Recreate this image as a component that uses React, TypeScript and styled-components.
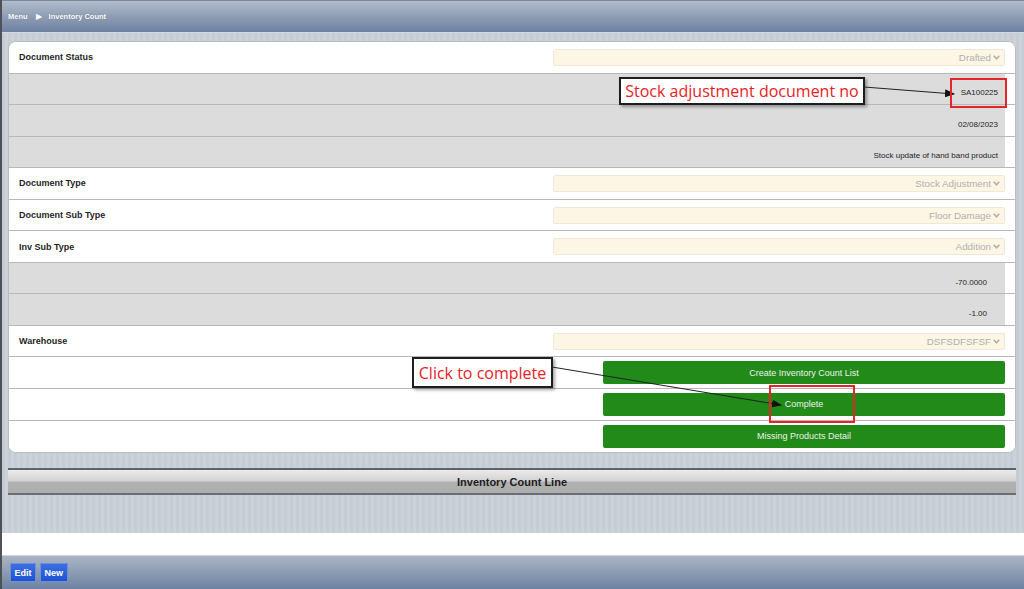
import React from 'react';
import styled, { createGlobalStyle } from 'styled-components';

const GlobalStyle = createGlobalStyle`
  html, body {
    margin: 0;
    padding: 0;
    background: #ffffff;
  }
  body {
    font-family: "Liberation Sans", Arial, sans-serif;
  }
`;

type FieldRow =
  | { kind: 'select'; label: string; value: string }
  | { kind: 'value'; value: string; inset?: boolean }
  | { kind: 'button'; text: string };

const rows: FieldRow[] = [
  { kind: 'select', label: 'Document Status', value: 'Drafted' },
  { kind: 'value', value: 'SA100225' },
  { kind: 'value', value: '02/08/2023' },
  { kind: 'value', value: 'Stock update of hand band product' },
  { kind: 'select', label: 'Document Type', value: 'Stock Adjustment' },
  { kind: 'select', label: 'Document Sub Type', value: 'Floor Damage' },
  { kind: 'select', label: 'Inv Sub Type', value: 'Addition' },
  { kind: 'value', value: '-70.0000', inset: true },
  { kind: 'value', value: '-1.00', inset: true },
  { kind: 'select', label: 'Warehouse', value: 'DSFSDFSFSF' },
  { kind: 'button', text: 'Create Inventory Count List' },
  { kind: 'button', text: 'Complete' },
  { kind: 'button', text: 'Missing Products Detail' },
];

const Chevron = () => (
  <svg width="7" height="5" viewBox="0 0 7 5">
    <path d="M0.7 0.8 L3.5 3.8 L6.3 0.8" fill="none" stroke="#b0b0b0" strokeWidth="1.6" />
  </svg>
);

const App: React.FC = () => {
  return (
    <Page>
      <GlobalStyle />
      <Header>
        <Crumb>Menu</Crumb>
        <CrumbArrow>▶</CrumbArrow>
        <Crumb>Inventory Count</Crumb>
      </Header>

      <Content>
        <Card>
          {rows.map((row, i) => {
            if (row.kind === 'select') {
              return (
                <Row key={i}>
                  <Label>{row.label}</Label>
                  <SelectBox>
                    <span>{row.value}</span>
                    <Chevron />
                  </SelectBox>
                </Row>
              );
            }
            if (row.kind === 'value') {
              return (
                <Row key={i} shaded>
                  <Value inset={row.inset}>{row.value}</Value>
                </Row>
              );
            }
            return (
              <Row key={i}>
                <ActionButton>{row.text}</ActionButton>
              </Row>
            );
          })}
        </Card>

        <SectionBar>Inventory Count Line</SectionBar>
      </Content>

      <Blank />

      <Footer>
        <FooterButton>Edit</FooterButton>
        <FooterButton>New</FooterButton>
      </Footer>

      <Callout style={{ left: 617, top: 77, width: 246, height: 28 }}>
        Stock adjustment document no
      </Callout>
      <Callout style={{ left: 410, top: 357, width: 141, height: 31 }}>
        Click to complete
      </Callout>

      <Overlay width="1024" height="589" viewBox="0 0 1024 589">
        <defs>
          <marker id="head" markerWidth="10" markerHeight="8" refX="9" refY="4" orient="auto" markerUnits="userSpaceOnUse">
            <path d="M0 0 L10 4 L0 8 Z" fill="#111" />
          </marker>
        </defs>
        <line x1="864" y1="87" x2="954" y2="94" stroke="#222" strokeWidth="1" markerEnd="url(#head)" />
        <line x1="552" y1="367" x2="781" y2="405" stroke="#222" strokeWidth="1" markerEnd="url(#head)" />
        <rect x="951" y="79" width="55" height="28" fill="none" stroke="#e4262a" strokeWidth="2" />
        <rect x="770" y="386" width="84" height="36" fill="none" stroke="#e4262a" strokeWidth="2" />
      </Overlay>
    </Page>
  );
};

const Page = styled.div`
  position: relative;
  display: flex;
  flex-direction: column;
  width: 1024px;
  height: 589px;
  box-sizing: border-box;
  border-left: 2px solid #4e5258;
  overflow: hidden;
`;

const Header = styled.div`
  display: flex;
  align-items: center;
  gap: 6px;
  height: 33px;
  flex-shrink: 0;
  padding-left: 6px;
  box-sizing: border-box;
  border-top: 1px solid #7d899b;
  border-bottom: 1px solid #d3d9e1;
  background: linear-gradient(#b2bdcc 0%, #8e9db4 50%, #6d81a1 100%);
`;

const Crumb = styled.span`
  font-size: 7.5px;
  font-weight: bold;
  color: #ffffff;
  text-shadow: 0 0 1px rgba(40, 50, 70, 0.4);
`;

const CrumbArrow = styled.span`
  font-size: 8px;
  color: #ffffff;
  margin: 0 1px 0 2px;
`;

const Content = styled.div`
  display: flex;
  flex-direction: column;
  flex-shrink: 0;
  padding: 8px 8px 38px 6px;
  background: repeating-linear-gradient(90deg, #c5ccd4 0 3px, #ccd2d9 3px 6px);
`;

const Card = styled.div`
  display: flex;
  flex-direction: column;
  background: #ffffff;
  border: 1px solid #b9bcc0;
  border-radius: 8px;
  overflow: hidden;
`;

const Row = styled.div<{ shaded?: boolean }>`
  display: flex;
  align-items: center;
  justify-content: flex-end;
  height: 31.55px;
  box-sizing: border-box;
  border-bottom: 1px solid #b8b8b8;
  background: ${({ shaded }) =>
    shaded ? 'linear-gradient(90deg, #dcdcdc calc(100% - 10px), #ffffff 0)' : '#ffffff'};

  &:last-child {
    border-bottom: none;
  }
`;

const Label = styled.div`
  flex: 1;
  padding-left: 10px;
  font-size: 9px;
  font-weight: bold;
  color: #1f1f1f;
`;

const SelectBox = styled.div`
  display: flex;
  align-items: center;
  justify-content: flex-end;
  gap: 2px;
  width: 452px;
  height: 17px;
  margin-right: 10px;
  padding-right: 4px;
  box-sizing: border-box;
  background: #fdf6e4;
  border: 1px solid #efe8d6;
  border-radius: 2px;
  font-size: 9.8px;
  color: #b0b0b0;
`;

const Value = styled.div<{ inset?: boolean }>`
  padding: 8px ${({ inset }) => (inset ? '28px' : '17px')} 0 0;
  font-size: 8px;
  color: #1e1e1e;
`;

const ActionButton = styled.div`
  display: flex;
  align-items: center;
  justify-content: center;
  width: 402px;
  height: 23px;
  margin-right: 10px;
  background: #228a18;
  border-radius: 2px;
  font-size: 9px;
  color: #eef2ee;
`;

const SectionBar = styled.div`
  display: flex;
  align-items: center;
  justify-content: center;
  margin-top: 15px;
  height: 27px;
  box-sizing: border-box;
  border-top: 2px solid #5f6368;
  border-bottom: 2px solid #6a6e73;
  background: linear-gradient(#ebebeb 0%, #d2d2d2 48%, #b0b0b0 52%, #aeaeae 100%);
  font-size: 11px;
  font-weight: bold;
  color: #1c1c1c;
`;

const Blank = styled.div`
  flex: 1;
  background: #ffffff;
`;

const Footer = styled.div`
  display: flex;
  align-items: flex-start;
  gap: 4px;
  height: 34px;
  flex-shrink: 0;
  padding: 7px 0 0 8px;
  box-sizing: border-box;
  border-top: 1px solid #d0d6de;
  background: linear-gradient(#aab5c4 0%, #8c9cb3 50%, #6d81a1 100%);
`;

const FooterButton = styled.div`
  display: flex;
  align-items: center;
  justify-content: center;
  height: 19px;
  padding: 0 3.5px;
  box-sizing: border-box;
  background: linear-gradient(#3b6fe2, #1f52cf);
  border: 1px solid #6f8fd8;
  font-size: 9px;
  font-weight: bold;
  color: #ffffff;
`;

const Callout = styled.div`
  position: absolute;
  display: flex;
  align-items: center;
  justify-content: center;
  box-sizing: border-box;
  background: #ffffff;
  border: 2px solid #1e1e1e;
  box-shadow: 2px 2px 3px rgba(0, 0, 0, 0.35);
  font-family: "Open Sans", "Noto Sans", sans-serif;
  font-size: 16px;
  color: #e8221f;
  white-space: nowrap;
`;

const Overlay = styled.svg`
  position: absolute;
  left: -2px;
  top: 0;
  pointer-events: none;
`;

export default App;
